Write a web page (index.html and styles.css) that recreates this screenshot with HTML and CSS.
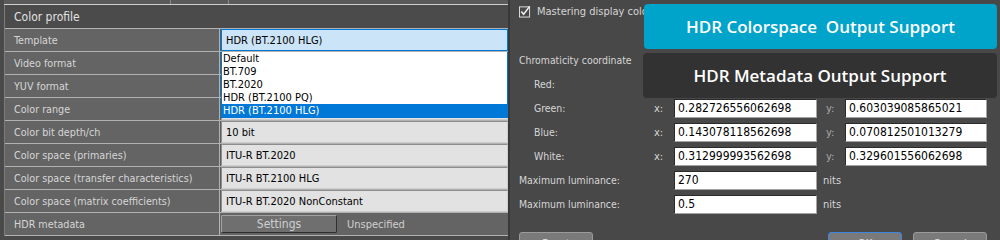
FILE: index.html
```html
<!DOCTYPE html>
<html lang="en">
<head>
  <meta charset="UTF-8">
  <meta name="viewport" content="width=device-width, initial-scale=1.0">
  <title>Color profile</title>
  <link rel="stylesheet" href="styles.css">
</head>
<body>
  <div class="app">
    <div class="profile">
      <div class="strip">
        <span class="cell c1"></span>
        <span class="cell c2"></span>
        <span class="cell"></span>
      </div>
      <div class="table">
        <div class="section">Color profile</div>
        <div class="row">
          <div class="label">Template</div>
          <div class="value">
            <div class="box open">HDR (BT.2100 HLG)</div>
            <ul class="list">
              <li>Default</li>
              <li>BT.709</li>
              <li>BT.2020</li>
              <li>HDR (BT.2100 PQ)</li>
              <li class="selected">HDR (BT.2100 HLG)</li>
            </ul>
          </div>
        </div>
        <div class="row">
          <div class="label">Video format</div>
          <div class="value"><div class="box">4:2:2 10bit</div></div>
        </div>
        <div class="row">
          <div class="label">YUV format</div>
          <div class="value"><div class="box">YCbCr</div></div>
        </div>
        <div class="row">
          <div class="label">Color range</div>
          <div class="value"><div class="box">Limited</div></div>
        </div>
        <div class="row">
          <div class="label">Color bit depth/ch</div>
          <div class="value"><div class="box">10 bit</div></div>
        </div>
        <div class="row">
          <div class="label">Color space (primaries)</div>
          <div class="value"><div class="box">ITU-R BT.2020</div></div>
        </div>
        <div class="row">
          <div class="label">Color space (transfer characteristics)</div>
          <div class="value"><div class="box">ITU-R BT.2100 HLG</div></div>
        </div>
        <div class="row">
          <div class="label">Color space (matrix coefficients)</div>
          <div class="value"><div class="box">ITU-R BT.2020 NonConstant</div></div>
        </div>
        <div class="row">
          <div class="label">HDR metadata</div>
          <div class="value inline">
            <button class="settings">Settings</button>
            <span class="note">Unspecified</span>
          </div>
        </div>
      </div>
    </div>

    <div class="mastering">
      <div class="check-row">
        <span class="checkbox">
          <svg width="13" height="13" viewBox="0 0 13 13">
            <rect x="0.5" y="1.5" width="11" height="11" fill="none" stroke="#e6e6e6"/>
            <path d="M2.5 6.5 L5 9.5 L11.5 1" fill="none" stroke="#f2f2f2" stroke-width="1.6"/>
          </svg>
        </span>
        <span>Mastering display color volume</span>
      </div>

      <div class="heading">Chromaticity coordinate</div>

      <div class="crow">
        <span class="name">Red:</span>
        <span class="axis">x:</span>
        <span class="field">0.708000004291534</span>
        <span class="axis y">y:</span>
        <span class="field">0.291999995708466</span>
      </div>
      <div class="crow">
        <span class="name">Green:</span>
        <span class="axis">x:</span>
        <span class="field">0.282726556062698</span>
        <span class="axis y">y:</span>
        <span class="field">0.603039085865021</span>
      </div>
      <div class="crow">
        <span class="name">Blue:</span>
        <span class="axis">x:</span>
        <span class="field">0.143078118562698</span>
        <span class="axis y">y:</span>
        <span class="field">0.070812501013279</span>
      </div>
      <div class="crow">
        <span class="name">White:</span>
        <span class="axis">x:</span>
        <span class="field">0.312999993562698</span>
        <span class="axis y">y:</span>
        <span class="field">0.329601556062698</span>
      </div>
      <div class="lrow">
        <span>Maximum luminance:</span>
        <span class="field">270</span>
        <span class="unit">nits</span>
      </div>
      <div class="lrow">
        <span>Maximum luminance:</span>
        <span class="field">0.5</span>
        <span class="unit">nits</span>
      </div>

      <div class="actions">
        <button class="btn">Reset</button>
        <button class="btn ok">OK</button>
        <button class="btn">Cancel</button>
      </div>

      <div class="badge colorspace">HDR Colorspace&nbsp; Output Support</div>
      <div class="badge metadata">HDR Metadata Output Support</div>
    </div>
  </div>
</body>
</html>
```
FILE: styles.css
```css
body {
  margin: 0;
  height: 240px;
  overflow: hidden;
  background: #484848;
  font-family: "DejaVu Sans Condensed", "DejaVu Sans", sans-serif;
  font-size: 11px;
  color: #d6d6d6;
}

.app {
  display: flex;
  height: 240px;
}

/* left: color profile table */
.profile {
  width: 508px;
  flex: none;
  box-sizing: border-box;
  padding-left: 4px;
  background: #4a4a4a;
}

.strip {
  display: flex;
  height: 4px;
  background: #5a5a5a;
  border-bottom: 1px solid #cfcfcf;
}

.strip .cell {
  flex: 1;
}

.strip .c1 {
  flex: none;
  width: 166px;
  border-right: 1px solid #8a8a8a;
}

.strip .c2 {
  flex: none;
  width: 57px;
  border-right: 1px solid #8a8a8a;
}

.table {
  border-left: 1px solid #7c7c7c;
}

.section {
  height: 22px;
  padding-top: 1px;
  line-height: 23px;
  padding-left: 9px;
  font-size: 12px;
  color: #e2e2e2;
  background: #4b4b4b;
  border-bottom: 1px solid #b2b2b2;
}

.row {
  display: grid;
  grid-template-columns: 215px 288px;
  height: 22px;
  border-bottom: 1px solid #b2b2b2;
}

.label {
  box-sizing: border-box;
  padding: 2px 0 0 9px;
  line-height: 20px;
  font-size: 10.7px;
  white-space: nowrap;
  background: #646464;
  border-right: 1px solid #b2b2b2;
}

.value {
  position: relative;
  padding-left: 1px;
  background: #5c5c5c;
}

.box {
  height: 22px;
  box-sizing: border-box;
  padding: 1px 0 0 4px;
  line-height: 19px;
  color: #000;
  background: #e2e2e2;
  border: 1px solid;
  border-color: #8c8c8c #cdcdcd #cdcdcd #8c8c8c;
}

.box.open {
  background: #cce4f7;
  border-color: #0078d7;
}

.list {
  position: absolute;
  top: 23px;
  left: 1px;
  z-index: 2;
  width: 287px;
  box-sizing: border-box;
  margin: 0;
  padding: 0;
  list-style: none;
  background: #fff;
  border: 1px solid #0078d7;
  border-top: 0;
  color: #000;
}

.list li {
  height: 13px;
  line-height: 13px;
  padding-left: 1px;
}

.list li.selected {
  background: #0078d7;
  color: #fff;
}

.value.inline {
  display: flex;
  align-items: center;
  background: #646464;
}

.settings {
  width: 116px;
  height: 18px;
  padding: 0;
  font: inherit;
  font-size: 12px;
  color: #cfcfcf;
  background: #6f6f6f;
  border: 1px solid;
  border-color: #a2a2a2 #2e2e2e #2e2e2e #a2a2a2;
  border-radius: 2px;
}

.note {
  margin-left: 10px;
  color: #d0d0d0;
}

/* right: mastering display */
.mastering {
  flex: 1;
  position: relative;
  padding: 4px 13px 0 9px;
  background: #484848;
  border-left: 2px solid #393939;
  font-size: 10.4px;
}

.check-row {
  display: flex;
  align-items: center;
  gap: 6px;
  height: 14px;
  white-space: nowrap;
  font-size: 11px;
}

.checkbox {
  display: flex;
  width: 12px;
  height: 13px;
}

.heading {
  margin-top: 34px;
  line-height: 16px;
  margin-bottom: 7px;
}

.crow {
  display: grid;
  grid-template-columns: 135px 20px 143px 28px 142px;
  height: 19px;
  margin-bottom: 5px;
  line-height: 19px;
}

.crow .name {
  padding-left: 15px;
}

.axis {
  font-size: 11px;
}

.axis.y {
  padding-left: 9px;
  color: #a9a9a9;
}

.lrow {
  display: grid;
  grid-template-columns: 155px 143px auto;
  height: 19px;
  margin-bottom: 5px;
  line-height: 19px;
}

.unit {
  padding-left: 6px;
  font-size: 11px;
}

.field {
  height: 19px;
  box-sizing: border-box;
  padding-left: 3px;
  line-height: 17px;
  font-size: 12px;
  color: #000;
  background: #fff;
  border: 1px solid;
  border-color: #2a2a2a #a4a4a4 #a4a4a4 #2a2a2a;
}

.actions {
  display: flex;
  gap: 11px;
  margin-top: 18px;
}

.btn {
  width: 74px;
  height: 22px;
  padding: 0;
  font: inherit;
  font-size: 11px;
  color: #e4e4e4;
  background: #7a7a7a;
  border: 1px solid #9a9a9a;
  border-radius: 3px;
}

.btn.ok {
  margin-left: auto;
  border-color: #3f86e0;
}

.badge {
  position: absolute;
  height: 45px;
  line-height: 45px;
  text-align: center;
  font-family: "Open Sans", sans-serif;
  font-weight: 600;
  font-size: 17px;
  color: #fff;
  border-radius: 4px;
  white-space: nowrap;
}

.colorspace {
  top: 4px;
  left: 134px;
  width: 353px;
  background: #00a3ca;
}

.metadata {
  top: 53px;
  left: 133px;
  width: 354px;
  background: #323232;
}
```
